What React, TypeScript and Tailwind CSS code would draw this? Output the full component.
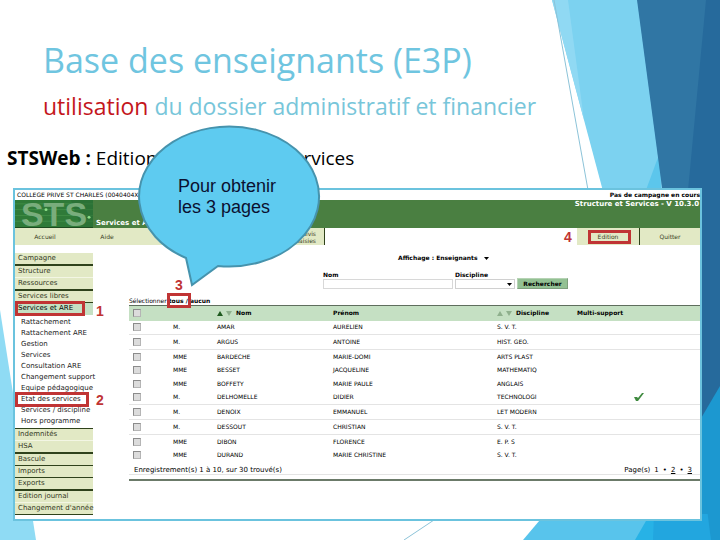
interface MenuItem {
  label: string;
  line: string;
}

interface Teacher {
  civ: string;
  nom: string;
  prenom: string;
  discipline: string;
  multi?: boolean;
  ruled?: boolean;
}

const topMenu: MenuItem[] = [
  { label: 'Campagne', line: 'h-[13px] border-b-2 border-[#2f421b]' },
  { label: 'Structure', line: 'h-3 border-b border-[#f3f6e4]' },
  { label: 'Ressources', line: 'h-[13px] border-b-2 border-[#2f421b]' },
  { label: 'Services libres', line: 'h-3 border-b border-[#2f421b]' },
];

const subMenu = [
  'Rattachement',
  'Rattachement ARE',
  'Gestion',
  'Services',
  'Consultation ARE',
  'Changement support',
  'Equipe pédagogique',
  'Etat des services',
  'Services / discipline',
  'Hors programme',
];

const bottomMenu: MenuItem[] = [
  { label: 'Indemnités', line: 'h-3 border-b border-[#f3f6e4]' },
  { label: 'HSA', line: 'h-[13px] border-b-2 border-[#2f421b]' },
  { label: 'Bascule', line: 'h-3 border-b border-[#2f421b]' },
  { label: 'Imports', line: 'h-3 border-b border-[#2f421b]' },
  { label: 'Exports', line: 'h-[13px] border-b-2 border-[#2f421b]' },
  { label: 'Edition journal', line: 'h-3 border-b border-[#f3f6e4]' },
  { label: "Changement d'année", line: 'h-3 border-b border-[#2f421b]' },
];

const teachers: Teacher[] = [
  { civ: 'M.', nom: 'AMAR', prenom: 'AURELIEN', discipline: 'S. V. T.', ruled: true },
  { civ: 'M.', nom: 'ARGUS', prenom: 'ANTOINE', discipline: 'HIST. GEO.', ruled: true },
  { civ: 'MME', nom: 'BARDECHE', prenom: 'MARIE-DOMI', discipline: 'ARTS PLAST' },
  { civ: 'MME', nom: 'BESSET', prenom: 'JACQUELINE', discipline: 'MATHEMATIQ' },
  { civ: 'MME', nom: 'BOFFETY', prenom: 'MARIE PAULE', discipline: 'ANGLAIS' },
  { civ: 'M.', nom: 'DELHOMELLE', prenom: 'DIDIER', discipline: 'TECHNOLOGI', multi: true, ruled: true },
  { civ: 'M.', nom: 'DENOIX', prenom: 'EMMANUEL', discipline: 'LET MODERN', ruled: true },
  { civ: 'M.', nom: 'DESSOUT', prenom: 'CHRISTIAN', discipline: 'S. V. T.', ruled: true },
  { civ: 'MME', nom: 'DIBON', prenom: 'FLORENCE', discipline: 'E. P. S' },
  { civ: 'MME', nom: 'DURAND', prenom: 'MARIE CHRISTINE', discipline: 'S. V. T.' },
];

const checkbox =
  'block size-2 appearance-none border border-[#8b8b8b] border-r-[#b5b5b5] border-b-[#b5b5b5] bg-[#dcdcdc] checked:bg-[#4a7f41]';

function Backdrop() {
  return (
    <svg
      className="absolute inset-0 size-full"
      viewBox="0 0 720 540"
      preserveAspectRatio="none"
      aria-hidden="true"
    >
      <polygon points="0,310 36,540 0,540" fill="#8fdbf4" />
      <polygon points="552,0 720,0 720,540 696,540" fill="#7cd2f0" />
      <polygon points="552,0 568,0 584,120" fill="#90d9f3" />
      <polygon points="660,152 661,190 646,190" fill="#5cc6ec" />
      <polygon points="637,0 720,0 720,540 709,540" fill="#3076a4" />
      <polygon points="706,0 720,0 720,540 655,540" fill="#266a9c" />
      <polygon points="720,386 720,540 690,540 690,437" fill="#1c98d0" />
      <polygon points="523,540 545,514 720,514 720,540" fill="#58c4ec" />
      <polygon points="635,540 650,514 720,514 720,540" fill="#27b2e6" />
      <polygon points="654,514 720,514 720,540 653,540" fill="#22a6df" />
      <polygon points="702,470 720,470 720,540 711,540" fill="#1c98d0" />
      <path d="M554 0L588 190M464 500L404 540" stroke="#8cc3d8" strokeWidth="1" fill="none" />
    </svg>
  );
}

function Callout() {
  return (
    <div className="absolute top-[124px] left-[138px] z-20 h-[164px] w-[184px]">
      <svg className="absolute inset-0 size-full" viewBox="0 0 184 164" aria-hidden="true">
        <path
          d="M48 134A90 70 0 1 1 80 142L54 161Z"
          fill="#5ecbf0"
          stroke="#4693ad"
          strokeWidth="2"
        />
      </svg>
      <p className="relative pt-[52px] pl-10 text-[18px] leading-[21px] text-[#0b1030]">
        Pour obtenir
        <br />
        les 3 pages
      </p>
    </div>
  );
}

function Step({ n, place }: { n: number; place: string }) {
  return (
    <span
      className={`absolute font-[Liberation_Sans,sans-serif] text-[14px] leading-3 font-bold text-[#c03434] ${place}`}
    >
      {n}
    </span>
  );
}

function Caret({ className }: { className?: string }) {
  return (
    <svg className={`h-[3px] w-[5px] ${className ?? ''}`} viewBox="0 0 5 3" aria-hidden="true">
      <path d="M0 0H5L2.500 3Z" fill="#000" />
    </svg>
  );
}

function Sorter({ active }: { active?: boolean }) {
  return (
    <svg className="mr-1 inline-block h-[5px] w-[15px]" viewBox="0 0 15 5" aria-hidden="true">
      <path d="M0 5L3 0L6 5Z" fill={active ? '#1f5a1f' : '#8fb08d'} />
      <path d="M9 0L15 0L12 5Z" fill="#8fb08d" />
    </svg>
  );
}

function Logo() {
  return (
    <div className="relative flex w-[78px] items-center justify-center border-b border-[#1d4a1f] bg-[#2f7a38] font-[Liberation_Sans,sans-serif] text-[34px] leading-7 text-[#79ad7c]">
      <svg className="absolute inset-0 size-full" viewBox="0 0 78 28" preserveAspectRatio="none" aria-hidden="true">
        <path d="M0 4H78M0 10H78M0 16H78M0 22H78" stroke="#3f8d45" strokeWidth="1" />
        <path d="M56 0H78V28H66Z" fill="#276a33" opacity="0.500" />
        <circle cx="31" cy="10" r="1.500" fill="#8fe08a" />
        <circle cx="74" cy="18" r="1.500" fill="#8fe08a" />
        <circle cx="12" cy="22" r="1.500" fill="#7fd67c" />
      </svg>
      <span className="relative">STS</span>
    </div>
  );
}

function Sidebar() {
  return (
    <nav className="w-[78px] shrink-0 pt-2 text-[7px] leading-[11px] whitespace-nowrap text-[#34391f]">
      {topMenu.map((item) => (
        <a key={item.label} href="#" className={`block bg-[#e2e9c5] pl-[3px] ${item.line}`}>
          {item.label}
        </a>
      ))}
      <div className="relative">
        <a href="#" className="block h-3 bg-[#c5e0c3] pl-[3px] text-black">
          Services et ARE
        </a>
        <span className="absolute -top-[2px] left-0 h-[15px] w-[70px] border-3 border-[#c03434]" />
        <Step n={1} place="top-[2px] left-[81px]" />
      </div>
      <div className="pt-[2px] pb-px text-[#222222]">
        {subMenu.map((label) => (
          <div key={label} className="relative">
            <a href="#" className="block h-[11px] pl-[6px]">
              {label}
            </a>
            {label === 'Etat des services' && (
              <>
                <span className="absolute -top-[2px] left-0 h-[15px] w-[74px] border-3 border-[#c03434]" />
                <Step n={2} place="top-0 left-[81px]" />
              </>
            )}
          </div>
        ))}
      </div>
      <div className="border-t border-[#2f421b]">
        {bottomMenu.map((item) => (
          <a key={item.label} href="#" className={`block bg-[#e2e9c5] pl-[3px] ${item.line}`}>
            {item.label}
          </a>
        ))}
      </div>
    </nav>
  );
}

function TeacherTable() {
  return (
    <table className="h-[157px] w-full table-fixed border-t border-[#5f6e5d] text-left">
      <thead>
        <tr className="h-[15px] bg-[#c5e0c3]">
          <th className="w-11 pl-1">
            <input type="checkbox" aria-label="Tout cocher" className={checkbox} />
          </th>
          <th className="w-11" />
          <th className="w-[116px]">
            <Sorter active />
            Nom
          </th>
          <th className="w-[164px]">Prénom</th>
          <th className="w-20">
            <Sorter />
            Discipline
          </th>
          <th>Multi-support</th>
        </tr>
      </thead>
      <tbody>
        {teachers.map((t) => (
          <tr key={t.nom} className={t.ruled ? 'border-b border-[#e4e4e4]' : ''}>
            <td className="pl-1">
              <input type="checkbox" aria-label={t.nom} className={checkbox} />
            </td>
            <td>{t.civ}</td>
            <td>{t.nom}</td>
            <td>{t.prenom}</td>
            <td>{t.discipline}</td>
            <td>
              {t.multi && (
                <svg className="mx-auto block h-2 w-[10px]" viewBox="0 0 10 8" aria-label="Oui">
                  <path d="M0 4L3 4L4 5L8 0L10 0L4 8L2 8Z" fill="#3f8a3f" />
                </svg>
              )}
            </td>
          </tr>
        ))}
      </tbody>
    </table>
  );
}

function StsWindow() {
  return (
    <section className="relative mr-[18px] ml-[13px] border-2 border-[#6bc3de] bg-white font-[DejaVu_Sans,sans-serif] text-[6px] leading-2 text-black">
      <div className="flex h-[10px] items-center justify-between pl-[2px] whitespace-nowrap">
        <span>COLLEGE PRIVE ST CHARLES (0040404X)</span>
        <span className="font-bold">Pas de campagne en cours</span>
      </div>

      <header className="flex h-7 bg-[#4a7f41] text-[7px] leading-[9px] font-bold text-white">
        <Logo />
        <h3 className="self-end pl-[3px]">Services et ARE</h3>
        <p className="ml-auto pr-px">Structure et Services - V 10.3.0</p>
      </header>

      <nav className="flex h-[17px] items-stretch justify-between text-[#3c4226]">
        <div className="flex w-[310px] items-center border-r border-[#2f421b] bg-[#e2e9c5]">
          <a href="#" className="w-[60px] text-center">Accueil</a>
          <a href="#" className="w-[64px] text-center">Aide</a>
          <a href="#" className="ml-auto pr-2 text-right leading-[7px]">
            Suivis
            <br />
            saisies
          </a>
        </div>
        <div className="relative flex w-[123px] items-center bg-[#e2e9c5]">
          <Step n={4} place="top-[3px] -left-[13px]" />
          <a href="#" className="flex h-full w-[63px] items-center justify-center border-r border-[#2f421b]">
            Edition
          </a>
          <span className="absolute top-[2px] left-[11px] h-[14px] w-[43px] border-3 border-[#c03434]" />
          <a href="#" className="flex-1 text-center">Quitter</a>
        </div>
      </nav>

      <div className="flex">
        <Sidebar />
        <main className="min-w-0 flex-1 pl-9">
          <p className="flex items-center gap-[6px] pt-2 pl-[269px] leading-[10px] font-bold">
            Affichage : Enseignants
            <Caret />
          </p>

          <form className="flex items-end gap-[2px] pt-2 pl-[194px] font-bold">
            <label className="w-[130px]">
              Nom
              <input type="text" className="block h-[10px] w-full border border-[#d8d8d8] bg-white" />
            </label>
            <label className="w-[60px]">
              Discipline
              <span className="relative block">
                <select className="block h-[10px] w-full appearance-none border border-[#d0d0d0] bg-white" />
                <Caret className="absolute top-1 right-[3px]" />
              </span>
            </label>
            <button
              type="button"
              className="h-[11px] w-[51px] border border-[#7d9f7c] border-t-[#b6d3b4] border-l-[#b6d3b4] bg-[#93c193]"
            >
              Rechercher
            </button>
          </form>

          <p className="relative pt-2 leading-[8px] font-bold">
            <span className="font-normal">Sélectionner</span> tous / aucun
            <span className="absolute top-[4px] left-[38px] z-10 h-[15px] w-6 border-3 border-[#c03434]" />
            <Step n={3} place="-top-[10px] left-[46px]" />
          </p>

          <TeacherTable />

          <footer className="border-b-2 border-[#6b7a69] pt-1 pb-1 text-[7px]">
            <div className="flex justify-between border-b border-[#e4e4e4] pr-2 pl-[5px]">
              <span>Enregistrement(s) 1 à 10, sur 30 trouvé(s)</span>
              <span className="flex gap-1">
                <span>Page(s)</span>
                <span>1</span>
                <span>•</span>
                <a href="#" className="underline">2</a>
                <span>•</span>
                <a href="#" className="underline">3</a>
              </span>
            </div>
          </footer>
        </main>
      </div>
      <div className="h-1" />
    </section>
  );
}

export default function App() {
  return (
    <div className="relative min-h-screen overflow-hidden bg-white font-[Liberation_Sans,sans-serif]">
      <Backdrop />
      <div className="relative font-[Open_Sans,sans-serif]">
        <h1 className="pt-10 pl-[43px] text-[34px] leading-[40px] font-medium text-[#6fc5e0]">
          Base des enseignants (E3P)
        </h1>
        <h2 className="pt-[10px] pl-[43px] text-[23px] leading-[32px] text-[#78c6da]">
          <span className="text-[#c4161c]">utilisation</span> du dossier administratif et financier
        </h2>
        <p className="pt-6 pb-[18px] pl-[7px] text-[19px] leading-6 text-black">
          <strong>STSWeb :</strong> Edition des états des services
        </p>
        <StsWindow />
      </div>
      <Callout />
    </div>
  );
}
